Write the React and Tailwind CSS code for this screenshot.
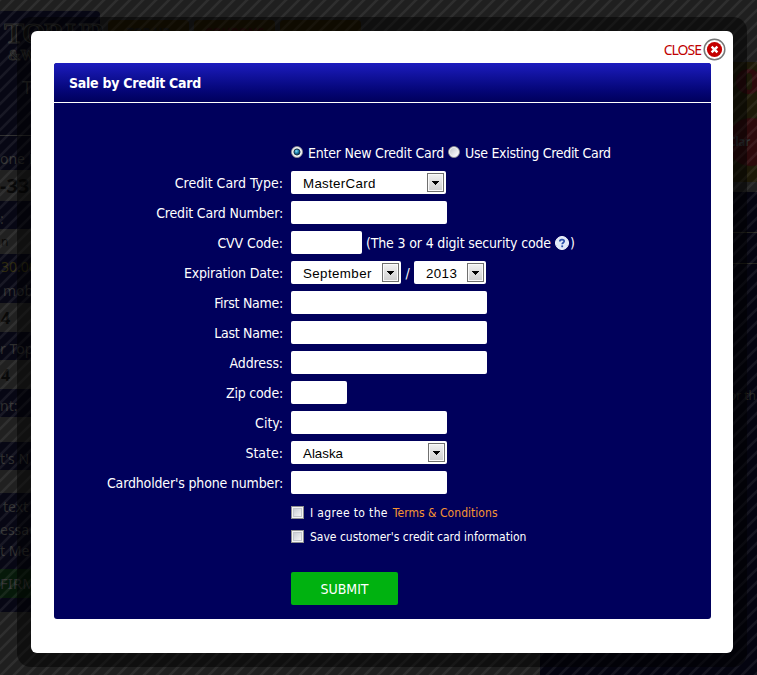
const stub = "flex w-full shrink-0 items-center overflow-hidden";

function Sidebar() {
  return (
    <div className="mt-[11px] flex h-[601px] w-[100px] flex-col rounded-tr bg-[#070714]">
      <div className="flex h-[125px] shrink-0 flex-col border-b border-[#303030] pt-[8px] pl-1">
        <span className="font-['Liberation_Serif',serif] text-[30px] leading-[27px] font-bold tracking-[-1.5px] text-[#101010] [-webkit-text-stroke:1px_#2e2e2e]">TOP UP</span>
        <span className="mt-[2px] pl-1 font-['Liberation_Serif',serif] text-[15px] font-bold text-[#101010] [-webkit-text-stroke:1px_#2a2a2a]">&amp;W</span>
        <span className="mt-[15px] pl-[18px] text-[18px]">T</span>
      </div>
      <div className={`${stub} h-[34px] pt-[12px]`}>one N</div>
      <div className={`${stub} h-[31px] bg-[#202020] text-[20px] font-bold text-[#080808]`}>-33</div>
      <div className={`${stub} h-[28px] pt-[8px]`}>:</div>
      <div className={`${stub} h-[25px] bg-[#202020] pl-px text-[12px] text-[#080808]`}>n</div>
      <div className={`${stub} h-[25px] pl-px text-[#2c280b]`}>30.00</div>
      <div className={`${stub} h-[24px] pl-[3px]`}>mobile</div>
      <div className={`${stub} h-[29px] bg-[#202020] pl-px text-[16px] font-bold text-[#080808]`}>4</div>
      <div className={`${stub} h-[28px] pt-[6px]`}>r Top</div>
      <div className={`${stub} h-[29px] bg-[#202020] pl-px text-[16px] font-bold text-[#080808]`}>4</div>
      <div className={`${stub} h-[28px] pt-[6px]`}>nt:</div>
      <div className={`${stub} h-[25px] bg-[#202020]`} />
      <div className={`${stub} h-[28px] pt-[6px]`}>t&apos;s N</div>
      <div className={`${stub} h-[23px] bg-[#202020]`} />
      <div className={`${stub} h-[27px] pl-[3px]`}>text</div>
      <div className={`${stub} h-[22px] pb-[3px]`}>essag</div>
      <div className={`${stub} h-[27px] pb-[9px]`}>t Me</div>
      <div className={`${stub} h-[29px] bg-[#06190a] text-[15px]`}>FIRM</div>
    </div>
  );
}

function Carriers() {
  return (
    <div className="mt-[62px] ml-auto flex w-[217px] flex-col">
      <div className="ml-auto flex h-[120px] w-[37px] flex-col items-start overflow-hidden bg-[#1d1908] pt-[7px]">
        <div className="ml-[16px] flex size-[25px] shrink-0 items-center justify-center rounded-full bg-[#2d0a0c]">
          <div className="h-[17px] w-[6px] rounded-full bg-[#1d1908]" />
        </div>
        <div className="mt-[24px] ml-[7px] flex size-12 shrink-0 items-center rounded-full bg-[#2d0a0c] pl-px text-[12px] font-bold tracking-[-0.5px] text-[#303034]">
          Clar
        </div>
      </div>
      <div className="ml-auto h-[10px] w-[37px] bg-[#1f1f1f]" />
      <div className="h-[41px] border-b border-[#24241f] bg-[#040410]" />
      <div className="h-[31px] border-b border-[#24241f] bg-[#040410]" />
      <div className="flex h-[411px] justify-end bg-[#040410] pt-[126px] pr-px text-[12px] text-[#24241f]">or th</div>
    </div>
  );
}

function Backdrop() {
  return (
    <div className='absolute inset-0 flex items-start overflow-hidden bg-[#1f1f1f] font-["Noto_Sans",sans-serif] text-[14px] leading-none whitespace-nowrap text-[#2e2e2e]'>
      <Sidebar />
      <div className="mt-[20px] ml-2 flex gap-[5px] text-[12px] font-bold">
        <div className="h-6 w-[81px] rounded-t bg-[#1f1703] pt-[7px] text-center text-[#151515]">TOP UP</div>
        <div className="h-6 w-[81px] rounded-t bg-[#1f1703] pt-[7px] text-center text-[#2b0909]">COUPONS</div>
        <div className="h-6 w-[81px] rounded-t bg-[#1f1703]" />
      </div>
      <Carriers />
      <svg className="absolute inset-0" width="757" height="675">
        <defs>
          <pattern id="stripes" width="13" height="13" patternUnits="userSpaceOnUse">
            <path d="M-2 15L15 -2M-2 2L2 -2M11 15L15 11" stroke="#fff" strokeOpacity=".065" strokeWidth="2.6" />
          </pattern>
        </defs>
        <rect width="757" height="675" fill="url(#stripes)" />
      </svg>
    </div>
  );
}

function Row({ label, track = "", children }) {
  return (
    <div className="flex h-[30px] items-center">
      <label className={`w-[229px] shrink-0 text-right ${track}`}>{label}</label>
      <div className="ml-2 flex h-full items-start pt-[3px]">{children}</div>
    </div>
  );
}

function Box({ width }) {
  return <input type="text" className={`h-[23px] rounded-[2px] bg-white px-2 text-black outline-none ${width}`} />;
}

function Select({ value, width, track = "" }) {
  return (
    <div className={`flex h-[23px] items-center justify-between rounded-[2px] bg-white pr-[2px] pl-3 font-["Liberation_Sans",Arial,sans-serif] text-[13.33px] text-black ${width}`}>
      <span className={`pt-[2px] ${track}`}>{value}</span>
      <span className="flex h-[19px] w-[17px] items-center justify-center border border-[#707070] bg-linear-to-b from-[#f2f2f2] to-[#cfcfcf] shadow-[inset_0_0_0_1px_#fafafa]">
        <svg width="7" height="4" shapeRendering="crispEdges"><path d="M0 0h7v1H6v1H5v1H4v1H3V3H2V2H1V1H0z" /></svg>
      </span>
    </div>
  );
}

function Radio({ checked }) {
  return (
    <svg className="mb-[2px] shrink-0" width="12" height="12" viewBox="0 0 12 12">
      <defs>
        <radialGradient id="dot" cx=".4" cy=".35" r=".6"><stop stopColor="#8fe0f8" /><stop offset=".55" stopColor="#1d86b5" /><stop offset="1" stopColor="#0b3350" /></radialGradient>
        <linearGradient id="rim" x2="1" y2="1"><stop stopColor="#c4c7cc" /><stop offset="1" stopColor="#fff" /></linearGradient>
      </defs>
      <circle cx="6" cy="6" r="5.5" fill="#f4f4f4" stroke="#8e8f8f" strokeWidth=".8" />
      <circle cx="6" cy="6" r="4" fill="url(#rim)" />
      {checked && <circle cx="6" cy="6" r="3" fill="url(#dot)" stroke="#17384f" strokeWidth="1" />}
    </svg>
  );
}

function Check() {
  return (
    <span className="mb-px flex size-[13px] shrink-0 items-center justify-center border border-[#8e8f8f] bg-[#f4f4f4]">
      <span className="size-[9px] border border-[#c3c7cc] bg-linear-to-br from-[#cbcfd5] to-[#f6f6f6]" />
    </span>
  );
}

function Help() {
  return (
    <svg className="ml-1" width="14" height="14" viewBox="0 0 14 14">
      <circle cx="7" cy="7" r="6.5" fill="#dfe8f8" stroke="#f4f7fd" />
      <path d="M4.8 5.4C4.8 3 9.2 3 9.2 5.3C9.2 6.8 7.2 6.7 7.2 8.3" fill="none" stroke="#2b50a8" strokeWidth="1.7" />
      <rect x="6.3" y="9.4" width="1.8" height="1.8" fill="#2b50a8" />
    </svg>
  );
}

export default function App() {
  return (
    <div className="relative h-[675px] w-[757px] overflow-hidden p-[17px]">
      <Backdrop />
      <div className="relative h-[650px] w-[730px] rounded-[14px] bg-black/50 p-[14px]">
        <div className='h-[622px] w-[702px] rounded-md bg-white px-[23px] font-["DejaVu_Sans_Condensed","DejaVu_Sans",sans-serif] text-[14px] leading-none [font-stretch:condensed] whitespace-nowrap text-white'>
          <div className="-mr-4 flex h-8 items-center justify-end pt-[5px]">
            <button className='flex items-center gap-px font-["Noto_Sans",sans-serif] text-[14px] text-[#c00000]'>
              <span className="tracking-[-1px]">CLOSE</span>
              <svg className="ml-px" width="23" height="23" viewBox="0 0 23 23">
                <circle cx="11.5" cy="11.5" r="10.3" fill="#fff" stroke="#777" strokeWidth="1.5" />
                <circle cx="11.5" cy="11.5" r="7.6" fill="#c40000" />
                <path d="M8.6 8.6L14.4 14.4M14.4 8.6L8.6 14.4" stroke="#fff" strokeWidth="2.4" />
              </svg>
            </button>
          </div>
          <div className="h-[556px] w-[657px] overflow-hidden rounded-[3px] bg-[#00005c]">
            <div className="flex h-10 items-center border-b border-white bg-linear-to-b from-[#1c1cbe] to-[#00005c] pl-[15px] font-bold">
              <span className="tracking-[-0.27px]">Sale by Credit Card</span>
            </div>
            <div className="pt-[35px]">
              <div className="flex h-[30px] items-center pl-[237px]">
                <Radio checked />
                <span className="ml-[5px] w-[136px] tracking-[-0.22px]">Enter New Credit Card</span>
                <span className="ml-1 flex"><Radio /></span>
                <span className="ml-[5px] tracking-[-0.29px]">Use Existing Credit Card</span>
              </div>
              <Row label="Credit Card Type:"><Select value="MasterCard" track="tracking-[0.3px]" width="w-[155px]" /></Row>
              <Row label="Credit Card Number:" track="tracking-[-0.16px]"><Box width="w-[156px]" /></Row>
              <Row label="CVV Code:" track="tracking-[-0.1px]">
                <Box width="w-[71px]" />
                <div className="flex h-[24px] items-center">
                  <span className="ml-1 w-[185px] tracking-[-0.16px]">(The 3 or 4 digit security code</span>
                  <Help />
                  <span className="ml-px">)</span>
                </div>
              </Row>
              <Row label="Expiration Date:" track="tracking-[-0.2px]">
                <Select value="September" track="tracking-[0.4px]" width="w-[110px]" />
                <span className="w-[13px] pt-[5px] text-center">/</span>
                <Select value="2013" track="tracking-[0.4px]" width="w-[72px]" />
              </Row>
              <Row label="First Name:" track="tracking-[-0.27px]"><Box width="w-[196px]" /></Row>
              <Row label="Last Name:" track="tracking-[-0.3px]"><Box width="w-[196px]" /></Row>
              <Row label="Address:" track="tracking-[-0.12px]"><Box width="w-[196px]" /></Row>
              <Row label="Zip code:" track="tracking-[-0.2px]"><Box width="w-[56px]" /></Row>
              <Row label="City:"><Box width="w-[156px]" /></Row>
              <Row label="State:"><Select value="Alaska" width="w-[156px]" /></Row>
              <Row label="Cardholder's phone number:" track="tracking-[-0.16px]"><Box width="w-[156px]" /></Row>
              <div className="flex h-[30px] items-center pl-[237px] text-[12px]">
                <Check />
                <span className="ml-[6px] tracking-[0.35px]">I agree to the</span>
                <span className="ml-[5px] tracking-[0.04px] text-[#f79433]">Terms &amp; Conditions</span>
              </div>
              <div className="flex h-[18px] items-center pl-[237px] text-[12px]">
                <Check />
                <span className="ml-[6px]">Save customer&apos;s credit card information</span>
              </div>
              <button className="mt-[26px] ml-[237px] h-[33px] w-[107px] rounded-[2px] bg-[#00b210]">SUBMIT</button>
            </div>
          </div>
        </div>
      </div>
    </div>
  );
}
